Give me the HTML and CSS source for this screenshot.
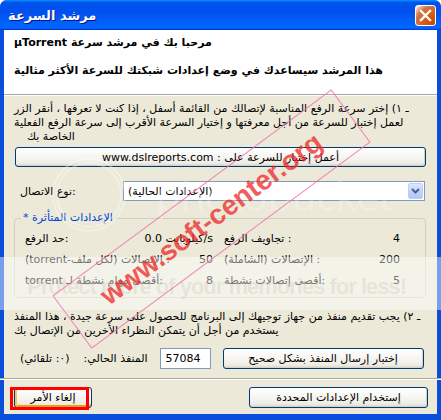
FILE: index.html
```html
<!DOCTYPE html>
<html lang="ar">
<head>
  <meta charset="UTF-8">
  <meta name="viewport" content="width=device-width, initial-scale=1.0">
  <title>مرشد السرعة</title>
  <link rel="stylesheet" href="styles.css">
</head>
<body>
  <div class="window">
    <div class="titlebar">
      <span class="title" dir="rtl">مرشد السرعة</span>
      <span class="close">
        <svg width="21" height="21" viewBox="0 0 21 21">
          <path d="M6 6 L15 15 M15 6 L6 15" stroke="#fff" stroke-width="2.4" stroke-linecap="square"/>
        </svg>
      </span>
    </div>

    <div class="frame">
      <div class="header">
        <p class="lead" dir="rtl">مرحبا بك في مرشد سرعة µTorrent</p>
        <p class="lead" dir="rtl">هذا المرشد سيساعدك في وضع إعدادات شبكتك للسرعة الأكثر مثالية</p>
      </div>

      <div class="content">
        <p class="step" dir="rtl">ـ ١) إختر سرعة الرفع المناسبة لإتصالك من القائمة أسفل ، إذا كنت لا تعرفها ، أنقر الزر<br>لعمل إختبار للسرعة من أجل معرفتها و إختيار السرعة الأقرب إلى سرعة الرفع الفعلية<br><span class="indent">الخاصة بك</span></p>

        <button class="btn wide" dir="rtl">أعمل إختبار للسرعة على : www.dslreports.com</button>

        <div class="conn">
          <span class="conn-label"><span dir="rtl">نوع الاتصال</span>:</span>
          <div class="select">
            <span dir="rtl">(الإعدادات الحالية)</span>
            <span class="arrow">
              <svg width="15" height="16" viewBox="0 0 15 16">
                <path d="M4 6 L7.5 9.5 L11 6" fill="none" stroke="#4d6185" stroke-width="2"/>
              </svg>
            </span>
          </div>
        </div>

        <fieldset class="group">
          <legend dir="rtl">الإعدادات المتأثرة *</legend>
          <div class="grid">
            <div class="cell"><span><span dir="rtl">حد الرفع</span>:</span><span>0.0 <span dir="rtl">كيلوبايت</span>/s</span></div>
            <div class="cell"><span><span dir="rtl">تجاويف الرفع</span> :</span><span>4</span></div>
            <div class="cell"><span><span dir="rtl">الإتصالات (لكل ملف-torrent)</span> :</span><span>50</span></div>
            <div class="cell"><span><span dir="rtl">الإتصالات (الشاملة)</span> :</span><span>200</span></div>
            <div class="cell"><span><span dir="rtl">أقصى مهام نشطة لـ torrent</span>:</span><span>8</span></div>
            <div class="cell"><span><span dir="rtl">أقصى إتصالات نشطة</span>:</span><span>5</span></div>
          </div>
        </fieldset>

        <p class="step step-two" dir="rtl">ـ ٢) يجب تقديم منفذ من جهاز توجيهك إلى البرنامج للحصول على سرعة جيدة ، هذا المنفذ<br>يستخدم من أجل أن يتمكن النظراء الأخرين من الإتصال بك</p>

        <div class="port">
          <span class="port-label" dir="rtl"><span>المنفذ الحالي:</span><span>(٠: تلقائي)</span></span>
          <span class="port-input">57084</span>
          <button class="btn" dir="rtl">إختبار إرسال المنفذ بشكل صحيح</button>
        </div>

        <div class="footer">
          <button class="btn cancel" dir="rtl">إلغاء الأمر</button>
          <button class="btn apply" dir="rtl">إستخدام الإعدادات المحددة</button>
        </div>
      </div>
    </div>

    <!-- watermarks and annotation from the screenshot -->
    <div class="pb-logo"><span class="pb-ring"></span><span class="pb-word">photobucket</span></div>
    <div class="pb-band">Protect more of your memories for less!</div>
    <div class="stamp"><span>www.soft-center.org</span></div>
    <div class="mark"></div>
  </div>
</body>
</html>
```

FILE: styles.css
```css
body {
  margin: 0;
  background: #fff;
  font-family: "DejaVu Sans", sans-serif;
  font-size: 11px;
  color: #000;
}
.window {
  position: relative;
  width: 441px;
  height: 420px;
  overflow: hidden;
  border-radius: 7px 7px 0 0;
  background: #0a4fdc;
}
.titlebar {
  height: 30px;
  display: flex;
  align-items: center;
  justify-content: space-between;
  padding: 0 5px 0 8px;
  background: linear-gradient(180deg, #0997ff, #0053ee 8%, #0050ee 40%, #06f 88%, #06f 93%, #005bff 95%, #003dd7 96%, #003dd7);
}
.title {
  color: #fff;
  font-weight: bold;
  font-size: 13px;
  text-shadow: 1px 1px #0f1089;
}
.close {
  display: block;
  width: 21px;
  height: 21px;
  border: 1px solid #fff;
  border-radius: 3px;
  box-sizing: border-box;
  background: radial-gradient(circle at 90% 90%, #cc4600 0%, #dc6527 55%, #cd7546 70%, #ffccb2 90%, #fff 100%);
}
.close svg {
  display: block;
  margin: -1px;
}
.frame {
  height: 390px;
  box-sizing: border-box;
  border: solid #0a4fdc;
  border-width: 0 4px 6px;
  background: #ece9d8;
}
.header {
  height: 65px;
  box-sizing: border-box;
  padding: 6px 10px 0;
  background: #fff;
  border-bottom: 1px solid #aca899;
}
.lead {
  margin: 0 0 14px;
  font-weight: bold;
  line-height: 14px;
  text-align: left;
}
.content {
  border-top: 1px solid #fff;
  padding: 6px 11px 0 10px;
}
.step {
  margin: 0;
  line-height: 14px;
  text-align: left;
  white-space: nowrap;
}
.indent {
  display: inline-block;
  margin-left: 13px;
}
.btn {
  font: inherit;
  color: #000;
  height: 21px;
  padding: 0;
  border: 1px solid #003c74;
  border-radius: 3px;
  background: linear-gradient(180deg, #fff, #f4f3ee 60%, #ecebe6 85%, #d6d0c5);
  box-shadow: inset -1px -1px #d6d0c5;
}
.wide {
  display: block;
  width: 411px;
  height: 20px;
  margin: 3px 0 0 1px;
}
.conn {
  display: flex;
  align-items: center;
  height: 20px;
  margin-top: 14px;
}
.conn-label {
  margin-left: 6px;
}
.select {
  display: flex;
  align-items: center;
  width: 302px;
  height: 20px;
  box-sizing: border-box;
  margin: 0 1px 0 auto;
  padding-left: 4px;
  border: 1px solid #7f9db9;
  background: #fff;
}
.arrow {
  margin-left: auto;
  margin-right: 1px;
  width: 15px;
  height: 16px;
  border: 1px solid #bad0fc;
  border-radius: 2px;
  box-sizing: border-box;
  background: linear-gradient(180deg, #dde8fe, #c1d3fb 50%, #b4c8f6);
}
.arrow svg {
  display: block;
  margin: -1px;
}
.group {
  margin: 10px 0 0;
  padding: 3px 0 6px 10px;
  border: 1px solid #d0d0bf;
  border-radius: 4px;
}
.group legend {
  margin-left: -4px;
  padding: 0 2px;
  line-height: 14px;
  color: #0046d5;
}
.grid {
  display: grid;
  grid-template-columns: 188px 176px;
  column-gap: 11px;
}
.cell {
  display: flex;
  justify-content: space-between;
  line-height: 21px;
}
.step-two {
  margin-top: 12px;
}
.port {
  display: grid;
  grid-template-columns: 1fr 51px 201px;
  column-gap: 12px;
  align-items: center;
  height: 22px;
  margin: 9px 3px 0 0;
}
.port-label {
  display: flex;
  justify-content: flex-end;
  gap: 14px;
  padding-left: 6px;
  white-space: nowrap;
}
.port-input {
  height: 21px;
  line-height: 19px;
  box-sizing: border-box;
  padding-left: 5px;
  border: 1px solid #7f9db9;
  background: #fff;
}
.footer {
  display: flex;
  justify-content: space-between;
  margin: 9px -15px 0 -14px;
  padding: 8px 13px 0 14px;
  border-top: 1px solid #aca899;
  box-shadow: inset 0 1px #fff;
}
.cancel {
  width: 78px;
  box-shadow: inset 2px 0 #f5c35a, inset 0 -2px #e5a01a, inset 0 2px #fce7b3;
}
.apply {
  width: 179px;
}

/* overlays copied from the screenshot */
.pb-logo {
  position: absolute;
  left: 52px;
  top: 158px;
  display: flex;
  align-items: center;
  gap: 30px;
  pointer-events: none;
}
.pb-ring {
  width: 62px;
  height: 62px;
  border-radius: 50%;
  border: 6px double rgba(255, 255, 255, 0.35);
}
.pb-word {
  font-family: "Open Sans", sans-serif;
  font-size: 40px;
  color: rgba(255, 255, 255, 0.25);
}
.pb-band {
  position: absolute;
  left: 0;
  top: 257px;
  width: 441px;
  height: 53px;
  box-sizing: border-box;
  padding: 19px 0 0 27px;
  background: rgba(255, 255, 255, 0.45);
  font-family: "Liberation Sans", sans-serif;
  font-weight: bold;
  font-size: 22px;
  line-height: 22px;
  letter-spacing: -1px;
  color: rgba(180, 176, 160, 0.22);
  white-space: nowrap;
}
.stamp {
  position: absolute;
  left: 38px;
  top: 186px;
  width: 347px;
  height: 66px;
  box-sizing: border-box;
  border: 1.5px solid rgba(240, 110, 170, 0.8);
  transform: rotate(-36.5deg);
  display: flex;
  align-items: center;
  justify-content: center;
}
.stamp span {
  font-family: "Liberation Sans", sans-serif;
  font-weight: bold;
  font-size: 28px;
  color: rgba(238, 40, 40, 0.75);
  white-space: nowrap;
}
.mark {
  position: absolute;
  left: 10px;
  top: 387px;
  width: 79px;
  height: 23px;
  box-sizing: border-box;
  border: 3px solid #f00;
}
```
